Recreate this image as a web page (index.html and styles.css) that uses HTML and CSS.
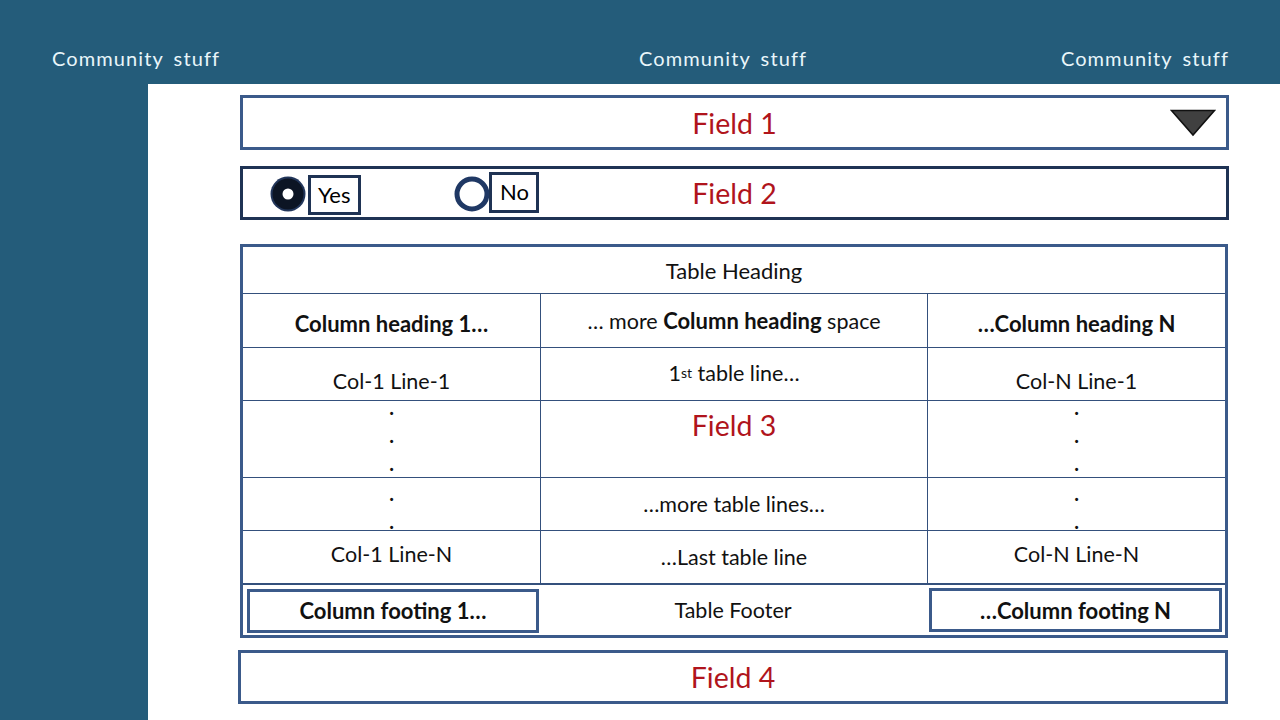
FILE: index.html
```html
<!DOCTYPE html>
<html lang="en">
<head>
<meta charset="utf-8">
<title>Form mockup</title>
<link rel="stylesheet" href="styles.css">
</head>
<body>
<div class="page">
  <header class="topbar">
    <span class="community">Community stuff</span>
    <span class="community">Community stuff</span>
    <span class="community">Community stuff</span>
  </header>
  <aside class="sidebar"></aside>
  <main class="content">
    <div class="field field-select">
      <span></span>
      <span class="field-label">Field 1</span>
      <svg class="dropdown" width="46" height="28" viewBox="0 0 46 28" aria-hidden="true">
        <polygon points="1.5,1.5 44.5,1.5 23,26" fill="#404040" stroke="#111" stroke-width="1.6" stroke-linejoin="miter"/>
      </svg>
    </div>

    <div class="field field-radio">
      <div class="radios">
        <div class="radio-option">
          <svg class="radio radio-on" width="36" height="36" viewBox="0 0 36 36" aria-hidden="true">
            <circle cx="18" cy="18" r="17.5" fill="#22365a"/>
            <circle cx="18" cy="18" r="15.5" fill="#0c1524"/>
            <circle cx="18" cy="18" r="5.5" fill="#ffffff"/>
          </svg>
          <span class="radio-text radio-yes">Yes</span>
        </div>
        <div class="radio-option radio-option-no">
          <svg class="radio radio-off" width="36" height="36" viewBox="0 0 36 36" aria-hidden="true">
            <circle cx="18" cy="18" r="15" fill="#ffffff" stroke="#1f3864" stroke-width="5"/>
          </svg>
          <span class="radio-text radio-no">No</span>
        </div>
      </div>
      <span class="field-label">Field 2</span>
      <span></span>
    </div>

    <div class="table">
      <div class="grid">
        <div class="cell heading">Table Heading</div>

        <div class="cell low"><b>Column heading 1…</b></div>
        <div class="cell">…&nbsp;more&nbsp;<b>Column heading</b>&nbsp;space</div>
        <div class="cell low"><b>…Column heading N</b></div>

        <div class="cell lower">Col-1 Line-1</div>
        <div class="cell up">1<sup>st</sup>&nbsp;table line…</div>
        <div class="cell lower">Col-N Line-1</div>

        <div class="cell top"><div class="dots dots-first">.<br>.<br>.</div></div>
        <div class="cell top"><span class="field-label field3">Field 3</span></div>
        <div class="cell top"><div class="dots dots-first">.<br>.<br>.</div></div>

        <div class="cell top"><div class="dots dots-second">.<br>.</div></div>
        <div class="cell">…more table lines…</div>
        <div class="cell top"><div class="dots dots-second">.<br>.</div></div>

        <div class="cell raised">Col-1 Line-N</div>
        <div class="cell">…Last table line</div>
        <div class="cell raised">Col-N Line-N</div>
      </div>
      <div class="table-footer">
        <div class="footing footing-first"><b>Column footing 1…</b></div>
        <div class="footer-label">Table Footer</div>
        <div class="footing footing-last"><b>…Column footing N</b></div>
      </div>
    </div>

    <div class="field field-plain">
      <span class="field-label">Field 4</span>
    </div>
  </main>
</div>
</body>
</html>
```

FILE: styles.css
```css
* {
  box-sizing: border-box;
}

html, body {
  margin: 0;
  padding: 0;
}

body {
  width: 1280px;
  height: 720px;
  overflow: hidden;
  background: #245c7a;
  font-family: Lato, "Open Sans", "Liberation Sans", sans-serif;
  color: #000;
}

.page {
  display: grid;
  grid-template-columns: 148px 1fr;
  grid-template-rows: 84px 636px;
  width: 1280px;
  height: 720px;
}

.topbar {
  grid-column: 1 / -1;
  display: grid;
  grid-template-columns: 587px 1fr auto;
  padding: 46px 51px 0 52px;
  background: #245c7a;
}

.community {
  font-size: 20px;
  line-height: 24px;
  color: #e9f6fa;
  letter-spacing: 1.1px;
  word-spacing: 4px;
  white-space: nowrap;
}

.sidebar {
  background: #245c7a;
}

.content {
  background: #ffffff;
  padding: 11px 51px 0 92px;
  display: flex;
  flex-direction: column;
}

/* ---------- Fields ---------- */

.field {
  border: 3px solid #3b5a8a;
  display: grid;
  grid-template-columns: 1fr auto 1fr;
  align-items: center;
}

.field-label {
  color: #b0141c;
  font-size: 28.5px;
  line-height: 34px;
  white-space: nowrap;
}

.field-select {
  height: 55px;
}

.dropdown {
  justify-self: end;
  margin-right: 10px;
  margin-top: 1px;
  display: block;
}

.field-radio {
  height: 54px;
  margin-top: 16px;
  border-color: #1f3354;
}

.radios {
  display: flex;
  align-items: center;
  padding-left: 27px;
}

.radio-option {
  display: flex;
  align-items: center;
}

.radio-option-no {
  margin-left: 93px;
}

.radio {
  display: block;
  flex: none;
}

.radio-on {
  margin-top: 2px;
}

.radio-off {
  margin-top: 2px;
}

.radio-text {
  border: 3px solid #1f3354;
  font-size: 22px;
  line-height: 34px;
  display: block;
}

.radio-yes {
  width: 53px;
  height: 40px;
  padding-left: 7px;
  margin-left: 2px;
  margin-top: 4px;
}

.radio-no {
  width: 50px;
  height: 41px;
  padding-left: 8px;
  margin-left: -1px;
  margin-top: -1px;
}

.field-plain {
  height: 54px;
  margin-top: 12px;
  margin-left: -2px;
  margin-right: 1px;
  grid-template-columns: 1fr;
  justify-items: center;
}

/* ---------- Table ---------- */

.table {
  margin-top: 24px;
  margin-right: 1px;
  border: 3px solid #3b5a8a;
  height: 394px;
  display: flex;
  flex-direction: column;
}

.grid {
  display: grid;
  grid-template-columns: 297px 386px 1fr;
  grid-template-rows: 46px 53px 52px 76px 52px 52px;
  gap: 1px;
  background: #34507c;
}

.cell {
  background: #ffffff;
  display: flex;
  align-items: center;
  justify-content: center;
  font-size: 21.5px;
  line-height: 26px;
  white-space: nowrap;
  color: #111;
}

.cell b {
  font-weight: 700;
  font-size: 22px;
}

.heading {
  grid-column: 1 / -1;
  font-size: 22px;
  padding-top: 2px;
}

.low {
  padding-top: 6px;
}

.lower {
  padding-top: 14px;
}

.up {
  padding-bottom: 2px;
}

.raised {
  padding-bottom: 6px;
}

.top {
  align-items: flex-start;
}

.cell sup {
  font-size: 14px;
  line-height: 0;
  vertical-align: 8px;
}

.dots {
  font-size: 20px;
  line-height: 28px;
  font-weight: 700;
  text-align: center;
}

.dots-first {
  margin-top: -8px;
}

.dots-second {
  margin-top: 1px;
}

.field3 {
  margin-top: 7px;
}

.table-footer {
  flex: 1;
  border-top: 2px solid #34507c;
  display: flex;
  align-items: center;
  padding: 0 3px 0 4px;
}

.footing {
  border: 3px solid #3b5a8a;
  height: 44px;
  display: flex;
  align-items: center;
  justify-content: center;
  font-size: 22px;
  color: #111;
  white-space: nowrap;
}

.footing-first {
  width: 292px;
  margin-top: 1px;
}

.footing-last {
  width: 293px;
}

.footer-label {
  flex: 1;
  text-align: center;
  font-size: 21.5px;
  color: #111;
  padding-right: 2px;
}
```
